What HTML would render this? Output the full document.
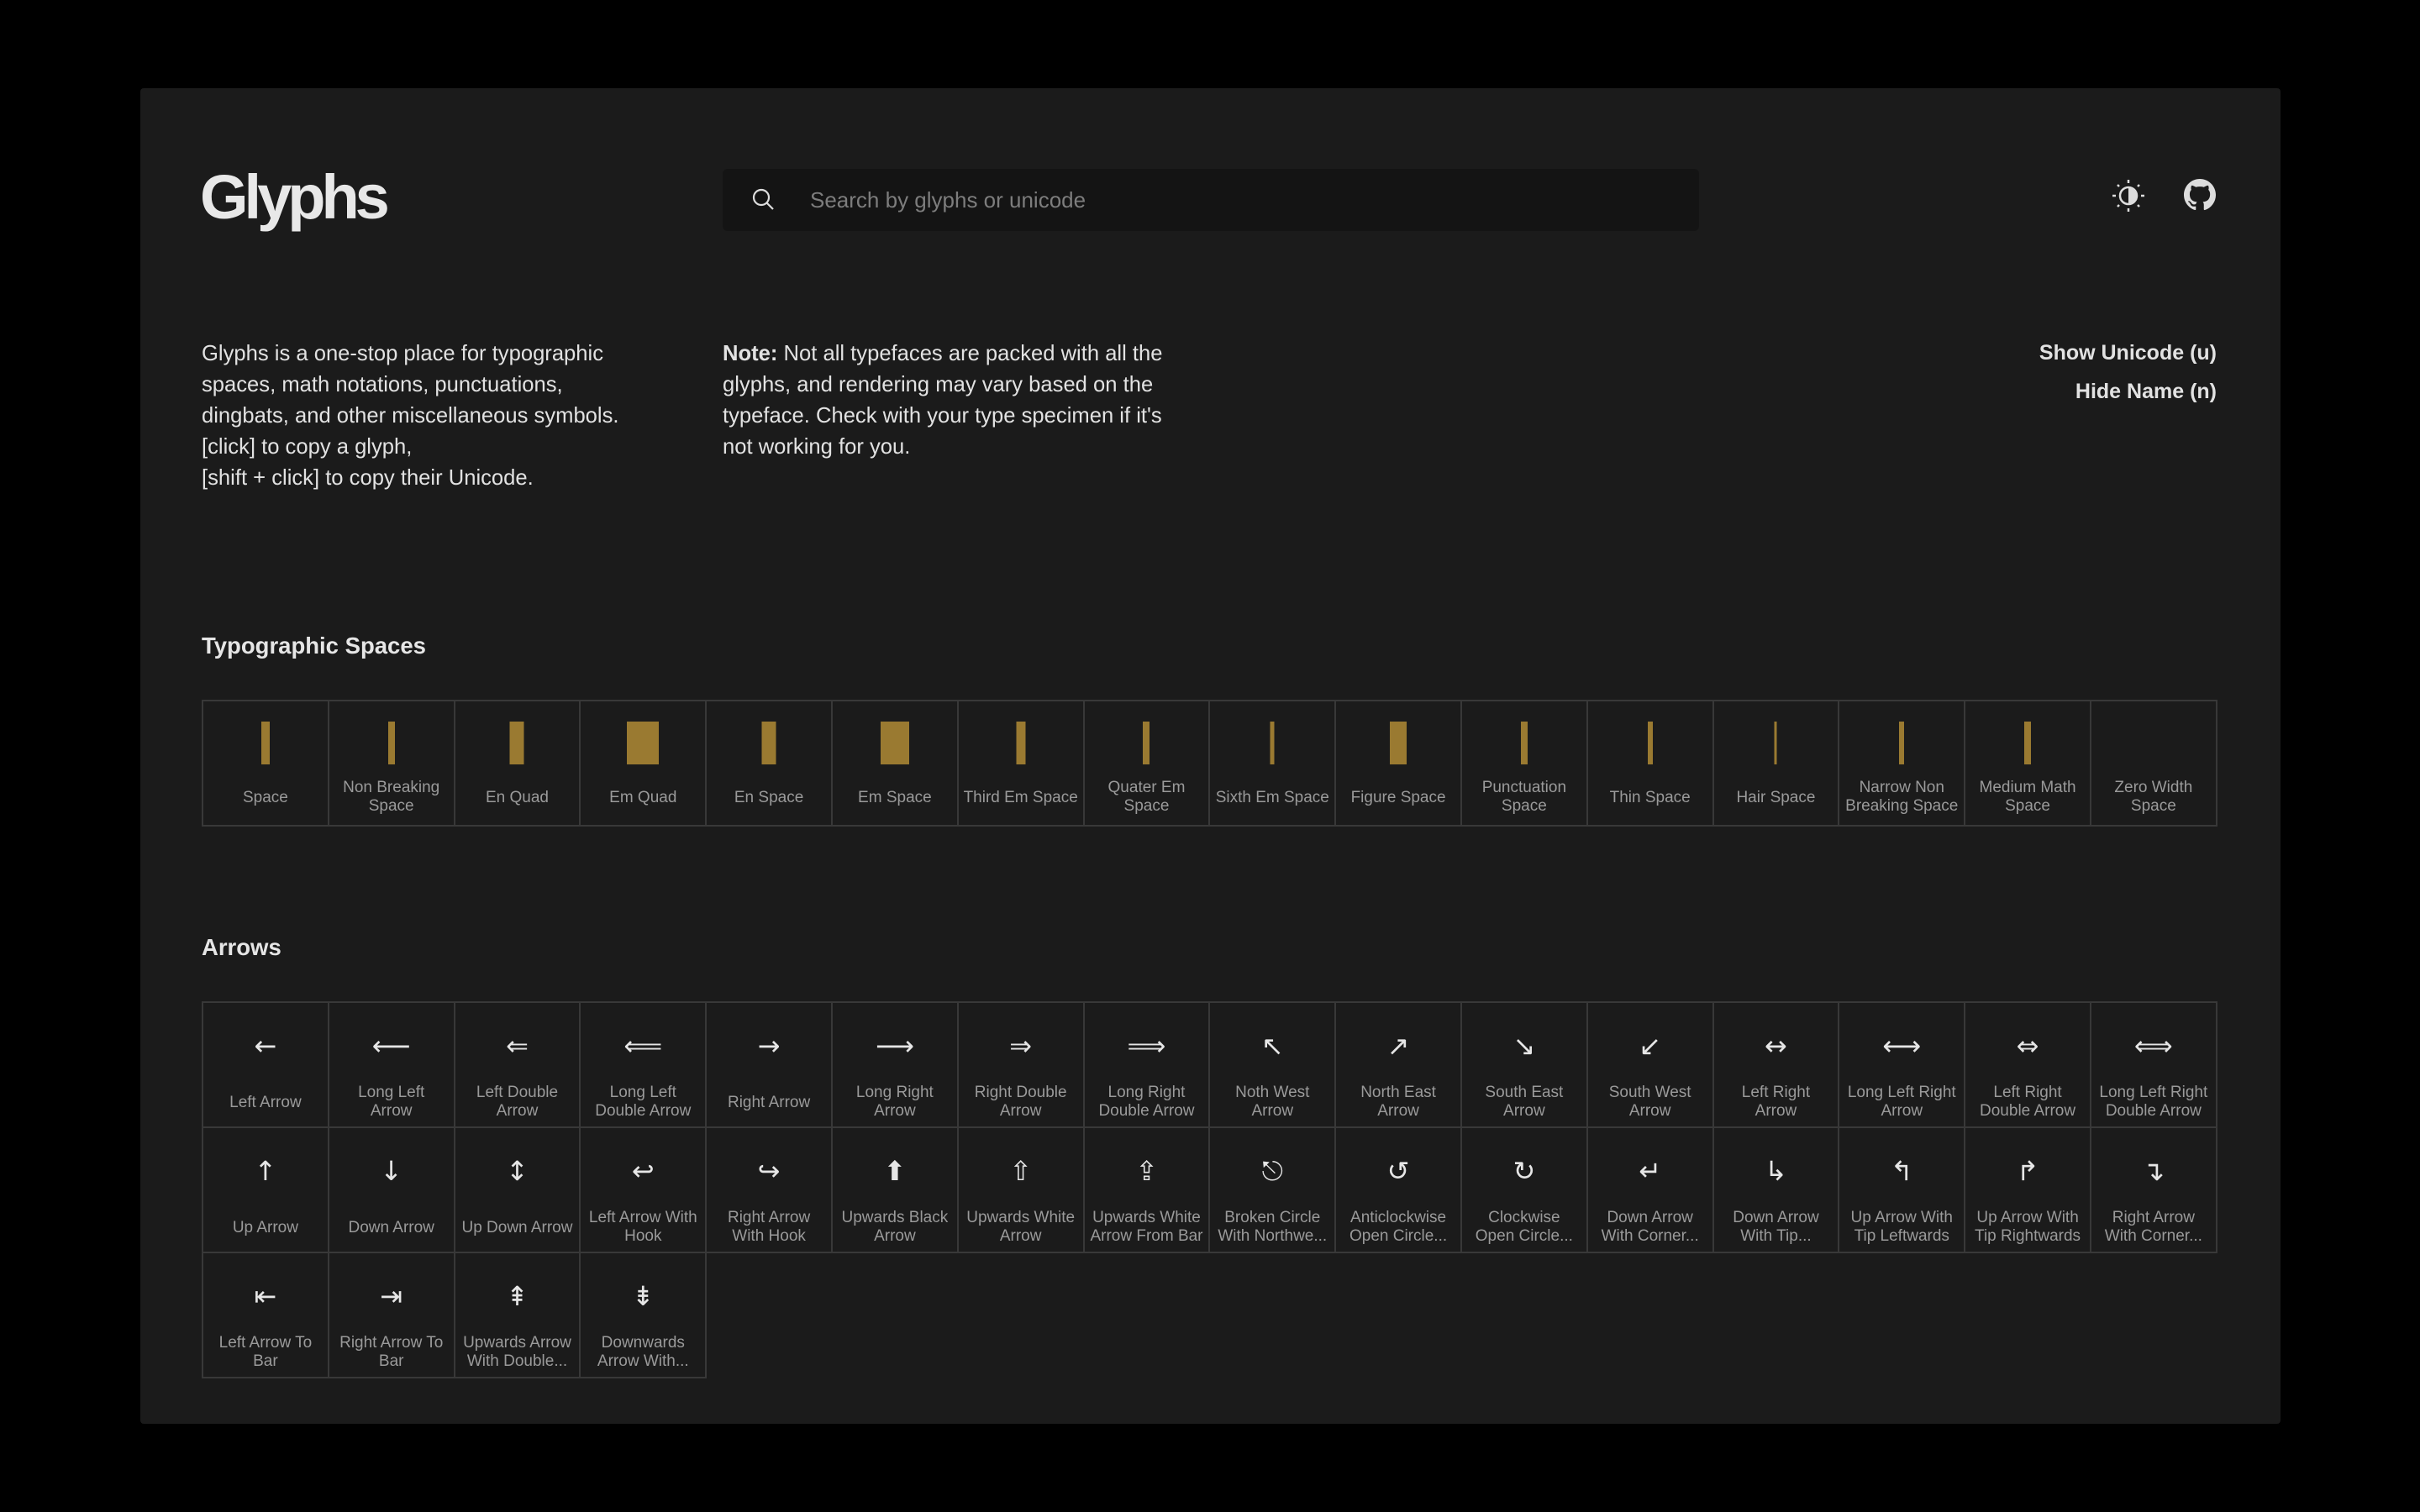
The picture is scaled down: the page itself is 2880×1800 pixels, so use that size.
<!DOCTYPE html>
<html><head><meta charset="utf-8"><style>
*{box-sizing:border-box;margin:0;padding:0}
html,body{width:2880px;height:1800px;background:#000;overflow:hidden}
body{font-family:"Liberation Sans","DejaVu Sans",sans-serif;color:#e6e6e6}
.card{position:absolute;left:167px;top:105px;width:2547px;height:1590px;background:#1b1b1b;border-radius:4px}
.abs{position:absolute}
h1{position:absolute;left:238px;top:190px;font-size:74px;font-weight:bold;letter-spacing:-5px;color:#e8e8e8;line-height:90px}
.search{position:absolute;left:860px;top:201px;width:1162px;height:74px;background:#141414;border-radius:6px}
.search span{position:absolute;left:104px;top:22px;font-size:26px;color:#7d7d7d}
.p{position:absolute;font-size:25.6px;line-height:37px;color:#e2e2e2}
.opt{position:absolute;right:242px;font-size:25px;font-weight:bold;color:#e2e2e2;text-align:right}
h2{position:absolute;left:240px;font-size:27.5px;font-weight:bold;color:#e6e6e6}
.grid{position:absolute;left:240px;display:grid;grid-template-columns:repeat(16,149.8px);border-left:2px solid #383838;border-top:2px solid #383838}
.c{height:149px;border-right:2px solid #383838;border-bottom:2px solid #383838;position:relative;text-align:center}
.c .l{position:absolute;left:0;right:0;bottom:11px;font-size:19px;line-height:22px;color:#9a9a9a;padding:0 4px;white-space:pre-line}
.c .l.one{bottom:21px}
.c .b{position:absolute;top:24px;height:51px;background:#9a7a31;left:50%;transform:translateX(-50%)}
.c .g{position:absolute;left:0;right:0;top:30px;font-family:"DejaVu Sans",sans-serif;font-size:32px;line-height:42px;color:#e6e6e6}
.ar .l{bottom:7px}
.ar .l.one{bottom:17px}
</style></head><body>
<div class="card"></div>
<h1>Glyphs</h1>
<div class="search">
<svg class="abs" style="left:34px;top:22px" width="30" height="30" viewBox="0 0 30 30"><circle cx="12" cy="12" r="9" fill="none" stroke="#ddd" stroke-width="2.2"/><line x1="18.5" y1="18.5" x2="26" y2="26" stroke="#ddd" stroke-width="2.2"/></svg>
<span>Search by glyphs or unicode</span></div>
<svg class="abs" style="left:2513px;top:213px" width="40" height="40" viewBox="0 0 40 40"><circle cx="20" cy="20" r="10" fill="none" stroke="#ddd" stroke-width="2.5"/><path d="M20 10a10 10 0 0 1 0 20z" fill="#ddd"/><g stroke="#ddd" stroke-width="2.5"><line x1="20" y1="1" x2="20" y2="5"/><line x1="20" y1="35" x2="20" y2="39"/><line x1="1" y1="20" x2="5" y2="20"/><line x1="35" y1="20" x2="39" y2="20"/><line x1="7" y1="7" x2="9" y2="9"/><line x1="31" y1="31" x2="33" y2="33"/><line x1="7" y1="33" x2="9" y2="31"/><line x1="31" y1="9" x2="33" y2="7"/></g></svg>
<svg class="abs" style="left:2599px;top:213px" width="38" height="38" viewBox="0 0 16 16"><path fill="#ddd" d="M8 0C3.58 0 0 3.58 0 8c0 3.540 2.29 6.53 5.47 7.59.4.07.55-.17.55-.38 0-.19-.01-.82-.01-1.49-2.01.37-2.53-.49-2.69-.94-.09-.23-.48-.94-.82-1.13-.28-.15-.68-.52-.01-.53.63-.01 1.08.58 1.23.82.72 1.21 1.87.87 2.33.66.07-.52.28-.87.51-1.07-1.78-.2-3.64-.89-3.64-3.95 0-.87.31-1.59.82-2.15-.08-.2-.36-1.02.08-2.12 0 0 .67-.21 2.2.82.64-.18 1.32-.27 2-.27.68 0 1.36.09 2 .27 1.53-1.04 2.2-.82 2.2-.82.44 1.1.16 1.92.08 2.12.51.56.82 1.27.82 2.15 0 3.07-1.87 3.75-3.65 3.95.29.25.54.73.54 1.48 0 1.07-.01 1.93-.01 2.2 0 .21.15.46.55.38A8.013 8.013 0 0016 8c0-4.42-3.58-8-8-8z"/></svg>
<div class="p" style="left:240px;top:403px">Glyphs is a one-stop place for typographic<br>spaces, math notations, punctuations,<br>dingbats, and other miscellaneous symbols.<br>[click] to copy a glyph,<br>[shift + click] to copy their Unicode.</div>
<div class="p" style="left:860px;top:403px"><b>Note:</b> Not all typefaces are packed with all the<br>glyphs, and rendering may vary based on the<br>typeface. Check with your type specimen if it's<br>not working for you.</div>
<div class="opt" style="top:406px">Show Unicode (u)</div>
<div class="opt" style="top:452px">Hide Name (n)</div>
<h2 style="top:753px">Typographic Spaces</h2>
<div class="grid" style="top:833px">
<div class="c"><div class="b" style="width:10px"></div><div class="l one">Space</div></div>
<div class="c"><div class="b" style="width:8px"></div><div class="l">Non Breaking
Space</div></div>
<div class="c"><div class="b" style="width:17px"></div><div class="l one">En Quad</div></div>
<div class="c"><div class="b" style="width:38px"></div><div class="l one">Em Quad</div></div>
<div class="c"><div class="b" style="width:17px"></div><div class="l one">En Space</div></div>
<div class="c"><div class="b" style="width:34px"></div><div class="l one">Em Space</div></div>
<div class="c"><div class="b" style="width:11px"></div><div class="l one">Third Em Space</div></div>
<div class="c"><div class="b" style="width:8px"></div><div class="l">Quater Em
Space</div></div>
<div class="c"><div class="b" style="width:5px"></div><div class="l one">Sixth Em Space</div></div>
<div class="c"><div class="b" style="width:20px"></div><div class="l one">Figure Space</div></div>
<div class="c"><div class="b" style="width:8px"></div><div class="l">Punctuation
Space</div></div>
<div class="c"><div class="b" style="width:6px"></div><div class="l one">Thin Space</div></div>
<div class="c"><div class="b" style="width:3px"></div><div class="l one">Hair Space</div></div>
<div class="c"><div class="b" style="width:6px"></div><div class="l">Narrow Non
Breaking Space</div></div>
<div class="c"><div class="b" style="width:8px"></div><div class="l">Medium Math
Space</div></div>
<div class="c"><div class="l">Zero Width
Space</div></div>
</div>
<h2 style="top:1112px">Arrows</h2>
<div class="grid ar" style="top:1192px">
<div class="c"><div class="g">←</div><div class="l one">Left Arrow</div></div>
<div class="c"><div class="g">⟵</div><div class="l">Long Left
Arrow</div></div>
<div class="c"><div class="g">⇐</div><div class="l">Left Double
Arrow</div></div>
<div class="c"><div class="g">⟸</div><div class="l">Long Left
Double Arrow</div></div>
<div class="c"><div class="g">→</div><div class="l one">Right Arrow</div></div>
<div class="c"><div class="g">⟶</div><div class="l">Long Right
Arrow</div></div>
<div class="c"><div class="g">⇒</div><div class="l">Right Double
Arrow</div></div>
<div class="c"><div class="g">⟹</div><div class="l">Long Right
Double Arrow</div></div>
<div class="c"><div class="g">↖</div><div class="l">Noth West
Arrow</div></div>
<div class="c"><div class="g">↗</div><div class="l">North East
Arrow</div></div>
<div class="c"><div class="g">↘</div><div class="l">South East
Arrow</div></div>
<div class="c"><div class="g">↙</div><div class="l">South West
Arrow</div></div>
<div class="c"><div class="g">↔</div><div class="l">Left Right
Arrow</div></div>
<div class="c"><div class="g">⟷</div><div class="l">Long Left Right
Arrow</div></div>
<div class="c"><div class="g">⇔</div><div class="l">Left Right
Double Arrow</div></div>
<div class="c"><div class="g">⟺</div><div class="l">Long Left Right
Double Arrow</div></div>
<div class="c"><div class="g">↑</div><div class="l one">Up Arrow</div></div>
<div class="c"><div class="g">↓</div><div class="l one">Down Arrow</div></div>
<div class="c"><div class="g">↕</div><div class="l one">Up Down Arrow</div></div>
<div class="c"><div class="g">↩</div><div class="l">Left Arrow With
Hook</div></div>
<div class="c"><div class="g">↪</div><div class="l">Right Arrow
With Hook</div></div>
<div class="c"><div class="g">⬆</div><div class="l">Upwards Black
Arrow</div></div>
<div class="c"><div class="g">⇧</div><div class="l">Upwards White
Arrow</div></div>
<div class="c"><div class="g">⇪</div><div class="l">Upwards White
Arrow From Bar</div></div>
<div class="c"><div class="g">⎋</div><div class="l">Broken Circle
With Northwe...</div></div>
<div class="c"><div class="g">↺</div><div class="l">Anticlockwise
Open Circle...</div></div>
<div class="c"><div class="g">↻</div><div class="l">Clockwise
Open Circle...</div></div>
<div class="c"><div class="g">↵</div><div class="l">Down Arrow
With Corner...</div></div>
<div class="c"><div class="g">↳</div><div class="l">Down Arrow
With Tip...</div></div>
<div class="c"><div class="g">↰</div><div class="l">Up Arrow With
Tip Leftwards</div></div>
<div class="c"><div class="g">↱</div><div class="l">Up Arrow With
Tip Rightwards</div></div>
<div class="c"><div class="g">↴</div><div class="l">Right Arrow
With Corner...</div></div>
<div class="c"><div class="g">⇤</div><div class="l">Left Arrow To
Bar</div></div>
<div class="c"><div class="g">⇥</div><div class="l">Right Arrow To
Bar</div></div>
<div class="c"><div class="g">⇞</div><div class="l">Upwards Arrow
With Double...</div></div>
<div class="c"><div class="g">⇟</div><div class="l">Downwards
Arrow With...</div></div>
</div>
</body></html>
